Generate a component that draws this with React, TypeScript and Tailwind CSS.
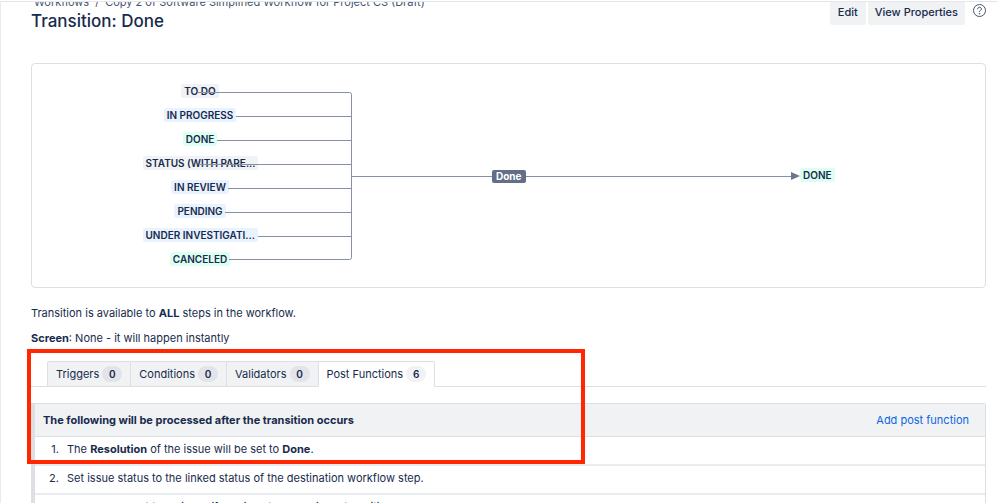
type Tone = "gray" | "blue" | "green";

const tones: Record<Tone, string> = {
  gray: "bg-[#f1f2f4]",
  blue: "bg-[#e9f2ff]",
  green: "bg-[#dcfff1]",
};

const steps: { name: string; tone: Tone; lineStart: number; wide?: boolean }[] = [
  { name: "TO DO", tone: "gray", lineStart: 166 },
  { name: "IN PROGRESS", tone: "blue", lineStart: 204 },
  { name: "DONE", tone: "green", lineStart: 185 },
  { name: "STATUS (WITH PARE...", tone: "gray", lineStart: 168, wide: true },
  { name: "IN REVIEW", tone: "blue", lineStart: 196 },
  { name: "PENDING", tone: "blue", lineStart: 193 },
  { name: "UNDER INVESTIGATI...", tone: "blue", lineStart: 226, wide: true },
  { name: "CANCELED", tone: "green", lineStart: 197 },
];

const tabs = [
  { name: "Triggers", count: 0 },
  { name: "Conditions", count: 0 },
  { name: "Validators", count: 0 },
  { name: "Post Functions", count: 6 },
];

function Lozenge({ name, tone, wide }: { name: string; tone: Tone; wide?: boolean }) {
  return (
    <span
      className={`block h-3.5 whitespace-nowrap rounded-xs px-[3px] text-[10px] leading-3.5 font-semibold ${tones[tone]} ${wide ? "w-[115px]" : ""}`}
    >
      {name}
    </span>
  );
}

function Diagram() {
  return (
    <section
      aria-label="Workflow diagram"
      className="relative h-[225px] overflow-hidden rounded-sm border border-[#dcdfe4]"
    >
      <ul className="flex w-[336px] flex-col items-center gap-2.5 pt-5">
        {steps.map((s) => (
          <li key={s.name}>
            <Lozenge name={s.name} tone={s.tone} wide={s.wide} />
          </li>
        ))}
      </ul>
      <svg
        className="absolute top-0 left-0"
        width="780"
        height="223"
        fill="none"
        stroke="#8590a6"
        strokeWidth="1"
        aria-hidden="true"
      >
        {steps.map((s, i) =>
          i === 0 || i === steps.length - 1 ? null : (
            <path key={s.name} d={`M${s.lineStart} ${28.5 + i * 24}H319.5`} />
          ),
        )}
        <path d="M166 28.5H317.5Q319.5 28.5 319.5 30.5V193.5Q319.5 195.5 317.5 195.5H197" />
        <path d="M319.5 112.5H760" />
        <path d="M759 108L768 112L759 116Z" fill="#6b778c" stroke="none" />
      </svg>
      <span className="absolute top-[106px] left-[460px] h-[13px] rounded-xs bg-[#626f86] px-1 text-[10px] leading-[13px] font-bold text-white">
        Done
      </span>
      <div className="absolute top-[104px] left-[768px]">
        <Lozenge name="DONE" tone="green" />
      </div>
    </section>
  );
}

export default function App() {
  return (
    <div className="h-screen overflow-hidden bg-white pt-px font-['Inter',sans-serif] text-[11px] leading-4 text-[#172b4d]">
      <main className="h-full overflow-hidden border-t border-l border-t-[#e4e6ea] border-l-[#e9ebee] pr-3 pl-[30px]">
        <header className="flex items-start justify-between">
          <div>
            <nav aria-label="Breadcrumb" className="-mt-2 flex gap-1.5 pl-[3px] text-[#44546f]">
              <a href="#workflows">Workflows</a>
              <span>/</span>
              <a href="#draft">Copy 2 of Software Simplified Workflow for Project CS (Draft)</a>
            </nav>
            <h1 className="text-[17px] leading-[22px] font-medium">Transition: Done</h1>
          </div>
          <div className="flex items-start gap-0.5 font-medium">
            <button className="h-[23px] rounded-b-xs bg-[#f1f2f4] px-2 pb-1">Edit</button>
            <button className="h-[23px] rounded-b-xs bg-[#f1f2f4] px-[7px] pb-1">View Properties</button>
            <button aria-label="Help" className="mt-0.5 ml-1.5">
              <svg width="13" height="13" viewBox="0 0 13 13" fill="none" stroke="#44546f" aria-hidden="true">
                <circle cx="6.5" cy="6.5" r="6" />
                <path d="M4.6 5.2C4.6 2.5 8.4 2.6 8.4 5C8.4 6.4 6.5 6.3 6.5 8" />
                <circle cx="6.5" cy="9.7" r=".8" fill="#44546f" stroke="none" />
              </svg>
            </button>
          </div>
        </header>

        <div className="mt-[31px]">
          <Diagram />
        </div>

        <p className="mt-[17px]">
          Transition is available to <strong>ALL</strong> steps in the workflow.
        </p>
        <p className="mt-[9px]">
          <strong>Screen</strong>: None - it will happen instantly
        </p>

        <div className="relative mt-[15px]">
          <div className="pointer-events-none absolute -top-3 -left-1 h-[115px] w-[558px] border-4 border-[#ff2600]" />
          <div role="tablist" className="flex border-b border-[#dcdfe4] pl-4">
            {tabs.map((t) => {
              const active = t.name === "Post Functions";
              return (
                <button
                  key={t.name}
                  role="tab"
                  aria-selected={active}
                  className={`-mb-px flex h-[26px] items-center gap-[3px] border border-[#dcdfe4] px-2 ${active ? "-ml-px rounded-tr-xs border-b-white bg-white" : "bg-[#f1f2f4] not-first:border-l-0 first:rounded-tl-xs"}`}
                >
                  {t.name}
                  <span
                    className={`h-4 w-5 rounded-full text-center text-[10px] leading-4 font-semibold ${active ? "bg-[#f1f2f4]" : "bg-[#e2e4e9]"}`}
                  >
                    {t.count}
                  </span>
                </button>
              );
            })}
          </div>
        </div>

        <section className="mt-4 rounded-tr-xs border border-l-4 border-[#dcdfe4]">
          <div className="flex items-center justify-between border-b border-[#dcdfe4] bg-[#f1f2f4] py-2 pr-4 pl-2">
            <h2 className="font-bold">The following will be processed after the transition occurs</h2>
            <a href="#add" className="text-[#0c66e4]">
              Add post function
            </a>
          </div>
          <ol className="list-none">
            <li className="flex gap-2 border-b-2 border-[#ebecf0] pt-1 pb-[7px]">
              <span className="w-6 text-right">1.</span>
              <p>
                The <strong>Resolution</strong> of the issue will be set to <strong>Done</strong>.
              </p>
            </li>
            <li className="flex gap-2 border-b-2 border-[#ebecf0] pt-1 pb-[7px]">
              <span className="w-6 text-right">2.</span>
              <p>Set issue status to the linked status of the destination workflow step.</p>
            </li>
            <li className="flex gap-2 pt-1 pb-[7px]">
              <span className="w-6 text-right">3.</span>
              <p>Add a comment to an issue if one is entered during a transition.</p>
            </li>
          </ol>
        </section>
      </main>
    </div>
  );
}
